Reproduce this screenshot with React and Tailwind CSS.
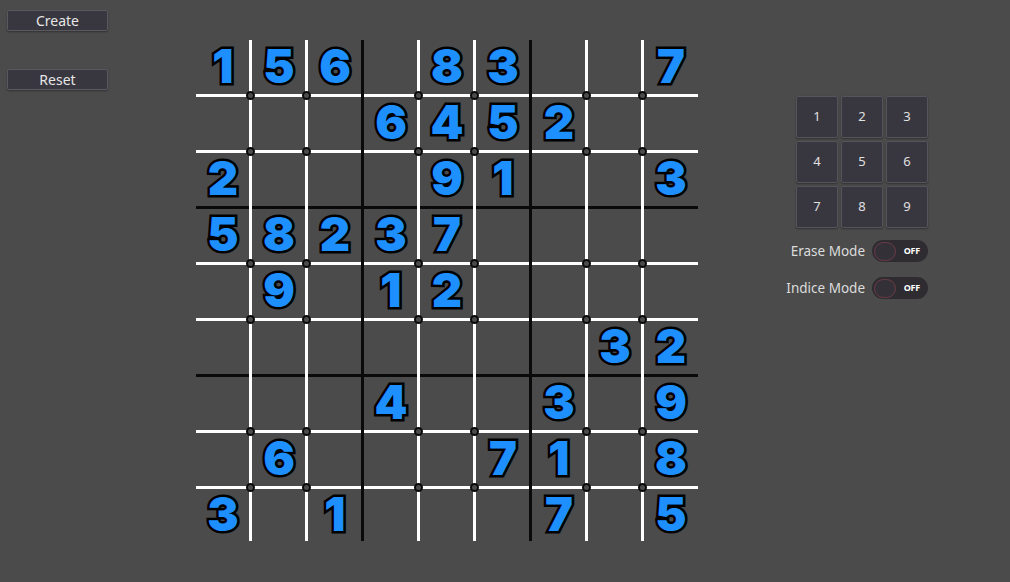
import React from "react";

const rows = [
  "156.83..7",
  "...6452..",
  "2...91..3",
  "58237....",
  ".9.12....",
  ".......32",
  "...4..3.9",
  ".6...71.8",
  "3.1...7.5",
];

const lineIdx = [0, 1, 2, 3, 4, 5, 6, 7];
const whiteIdx = [0, 1, 3, 4, 6, 7];

function Board() {
  return (
    <div className="relative w-[504px] h-[504px] mt-[39px] shrink-0">
      <div className="grid grid-cols-[repeat(9,56px)] grid-rows-[repeat(9,56px)]">
        {rows.flatMap((r, ri) =>
          r.split("").map((c, ci) => (
            <div
              key={ri + "-" + ci}
              className="flex items-center justify-center pb-[3px] text-[47px] leading-none font-black text-[#1e8fff] [font-family:Inter,'Noto_Sans',sans-serif] [-webkit-text-stroke:5px_#000] [paint-order:stroke_fill]"
            >
              {c === "." ? "" : c}
            </div>
          ))
        )}
      </div>
      {lineIdx.map((k) => (
        <div
          key={"h" + k}
          className={
            "absolute left-[1px] w-[502px] h-[3px] " +
            (k === 2 || k === 5 ? "bg-[#0a0a0a]" : "bg-white")
          }
          style={{ top: 55 + 56 * k }}
        />
      ))}
      {lineIdx.map((k) => (
        <div
          key={"v" + k}
          className={
            "absolute top-[1px] h-[501px] w-[3px] " +
            (k === 2 || k === 5 ? "bg-[#0a0a0a]" : "bg-white")
          }
          style={{ left: 54 + 56 * k }}
        />
      ))}
      {whiteIdx.flatMap((r) =>
        whiteIdx.map((c) => (
          <div
            key={"c" + r + "-" + c}
            className="absolute w-[9px] h-[9px] rounded-full border-2 border-[#0a0a0a] bg-[#4b4b4b]"
            style={{ left: 51 + 56 * c, top: 52 + 56 * r }}
          />
        ))
      )}
    </div>
  );
}

function Btn({ children }) {
  return (
    <div className="w-[101px] h-[21px] flex items-center justify-center bg-[#38363e] border border-[#5a5960] rounded-[2px] shadow-[0_1px_2px_rgba(0,0,0,0.35)] text-[14px] text-[#e6e6e6]">
      {children}
    </div>
  );
}

function Toggle({ label }) {
  return (
    <div className="flex items-center justify-end gap-[7px]">
      <span className="text-[13.5px] text-[#dcdcdc] whitespace-nowrap">{label}</span>
      <div className="w-[56px] h-[22px] rounded-full bg-[#2e2c31] flex items-center pl-[2px] pr-[8px] justify-between">
        <div className="w-[22px] h-[19px] rounded-full border border-[#6b3b45] bg-[#333137]" />
        <span className="text-[9px] font-bold text-white tracking-tight">OFF</span>
      </div>
    </div>
  );
}

export default function App() {
  return (
    <div className="w-[1010px] h-[582px] bg-[#4b4b4b] flex [font-family:'Noto_Sans',sans-serif] overflow-hidden">
      <div className="w-[195px] shrink-0 pl-[7px] pt-[10px] flex flex-col gap-[38px]">
        <Btn>Create</Btn>
        <Btn>Reset</Btn>
      </div>
      <Board />
      <div className="flex-1 pt-[96px] pr-[82px] flex flex-col items-end">
        <div className="grid grid-cols-[repeat(3,42px)] gap-[3px]">
          {[1, 2, 3, 4, 5, 6, 7, 8, 9].map((n) => (
            <div
              key={n}
              className="h-[42px] flex items-center justify-center bg-[#38363f] border border-[#55545a] rounded-[2px] shadow-[0_1px_2px_rgba(0,0,0,0.35)] text-[13px] text-[#e0e0e0]"
            >
              {n}
            </div>
          ))}
        </div>
        <div className="mt-[12px] flex flex-col gap-[15px]">
          <Toggle label="Erase Mode" />
          <Toggle label="Indice Mode" />
        </div>
      </div>
    </div>
  );
}
